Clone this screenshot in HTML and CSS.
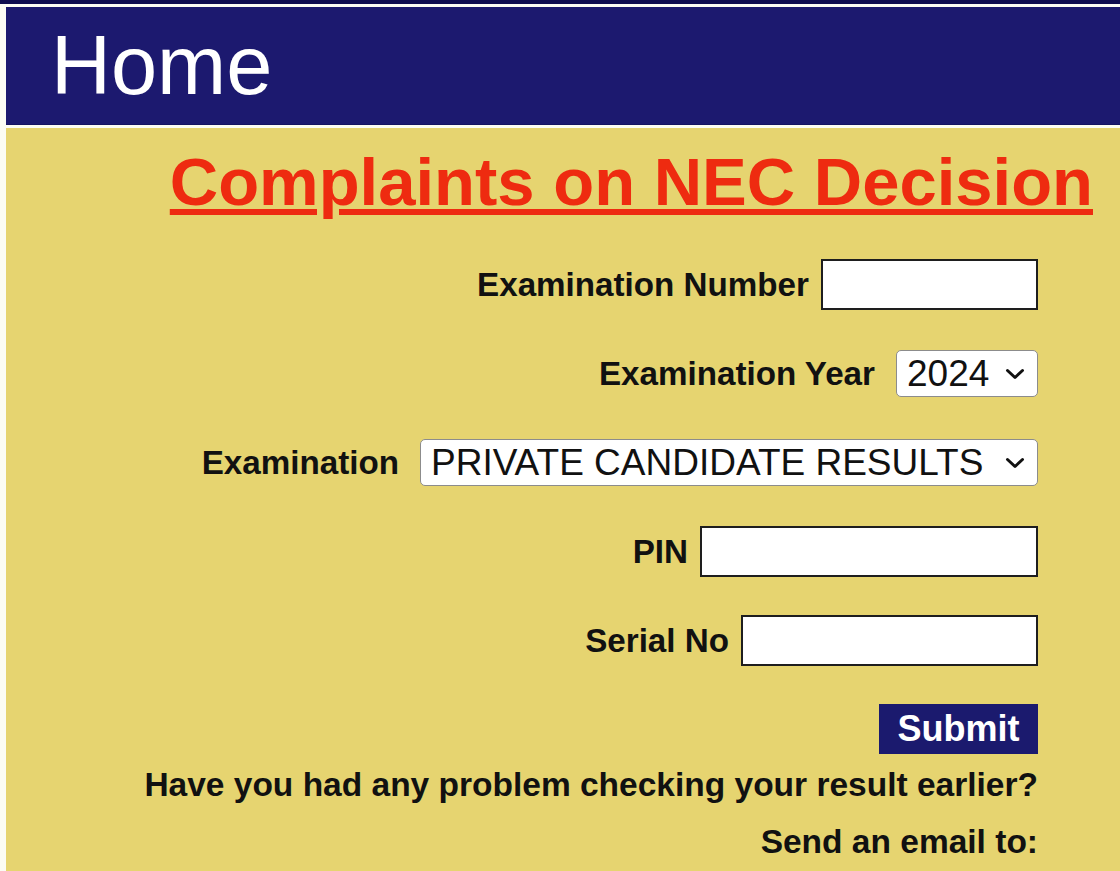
FILE: index.html
```html
<!DOCTYPE html>
<html lang="en">
<head>
<meta charset="utf-8">
<title>Complaints on NEC Decision</title>
<link rel="stylesheet" href="styles.css">
</head>
<body>
<div class="topstrip"></div>
<div class="page">
  <header class="header">
    <h1 class="header-title">Home</h1>
  </header>
  <main class="content">
    <h2 class="page-title">Complaints on NEC Decision</h2>
    <form class="form">
      <div class="row">
        <label class="label" for="exno">Examination Number</label>
        <input class="text-input w-number" id="exno" type="text">
      </div>
      <div class="row">
        <label class="label" for="year">Examination Year</label>
        <span class="select-wrap w-year">
          <select class="select" id="year"><option>2024</option></select>
          <svg class="chev" width="20" height="12" viewBox="0 0 20 12"><path d="M2.5 2.5 L10 9.5 L17.5 2.5" fill="none" stroke="#111" stroke-width="3" stroke-linecap="round" stroke-linejoin="round"/></svg>
        </span>
      </div>
      <div class="row">
        <label class="label" for="exam">Examination</label>
        <span class="select-wrap w-exam">
          <select class="select" id="exam"><option>PRIVATE CANDIDATE RESULTS</option></select>
          <svg class="chev" width="20" height="12" viewBox="0 0 20 12"><path d="M2.5 2.5 L10 9.5 L17.5 2.5" fill="none" stroke="#111" stroke-width="3" stroke-linecap="round" stroke-linejoin="round"/></svg>
        </span>
      </div>
      <div class="row">
        <label class="label" for="pin">PIN</label>
        <input class="text-input w-pin" id="pin" type="text">
      </div>
      <div class="row">
        <label class="label" for="serial">Serial No</label>
        <input class="text-input w-serial" id="serial" type="text">
      </div>
      <div class="row-button">
        <button class="submit" type="button">Submit</button>
      </div>
      <p class="note">Have you had any problem checking your result earlier?</p>
      <p class="note note-second">Send an email to:</p>
    </form>
  </main>
</div>
</body>
</html>
```
FILE: styles.css
```css
html, body {
  margin: 0;
  padding: 0;
}
body {
  background: #fcfcf4;
  font-family: "Liberation Sans", Arial, sans-serif;
  color: #111;
}
.topstrip {
  height: 4px;
  background: #0f0d50;
}
.page {
  margin-top: 3px;
  margin-left: 6px;
}
.header {
  height: 117px;
  background: #1c196f;
  border-bottom: 1px solid #151360;
  padding-left: 45px;
}
.header-title {
  margin: 0;
  color: #ffffff;
  font-weight: normal;
  font-size: 83px;
  line-height: 117px;
}
.content {
  margin-top: 3px;
  background: #e6d470;
  min-height: 760px;
  padding-top: 15px;
}
.page-title {
  margin: 0;
  padding-right: 27px;
  text-align: right;
  color: #ee2b10;
  font-size: 67px;
  font-weight: bold;
  line-height: 77px;
  text-decoration: underline;
}
.form {
  margin-top: 39px;
  padding-right: 82px;
}
.row {
  display: flex;
  justify-content: flex-end;
  align-items: center;
  height: 51px;
  margin-bottom: 38px;
}
.label {
  font-weight: bold;
  font-size: 33.2px;
  line-height: 38px;
}
.text-input {
  box-sizing: border-box;
  height: 51px;
  margin-left: 12px;
  border: 2px solid #1e1e1e;
  background: #fff;
  font-size: 30px;
  padding: 0 6px;
}
.w-number { width: 217px; }
.w-pin { width: 338px; }
.w-serial { width: 297px; }
.select-wrap {
  position: relative;
  display: inline-block;
  margin-left: 21px;
  height: 47px;
}
.w-year { width: 142px; }
.w-exam { width: 618px; }
.select {
  -webkit-appearance: none;
  appearance: none;
  box-sizing: border-box;
  width: 100%;
  height: 47px;
  border: 1px solid #8c8c8c;
  border-radius: 5px;
  background: #fff;
  color: #111;
  font-family: "Liberation Sans", Arial, sans-serif;
  font-size: 37px;
  padding: 0 40px 0 10px;
}
.chev {
  position: absolute;
  right: 13px;
  top: 18px;
  pointer-events: none;
}
.row-button {
  display: flex;
  justify-content: flex-end;
  margin-top: 4px;
}
.submit {
  box-sizing: border-box;
  width: 159px;
  height: 50px;
  padding: 0;
  border: none;
  background: #1b1a6e;
  color: #fff;
  font-family: "Liberation Sans", Arial, sans-serif;
  font-weight: bold;
  font-size: 36px;
}
.note {
  margin: 12px 0 0;
  text-align: right;
  font-weight: bold;
  font-size: 33.5px;
  line-height: 38px;
}
.note-second {
  margin-top: 19px;
}
```
